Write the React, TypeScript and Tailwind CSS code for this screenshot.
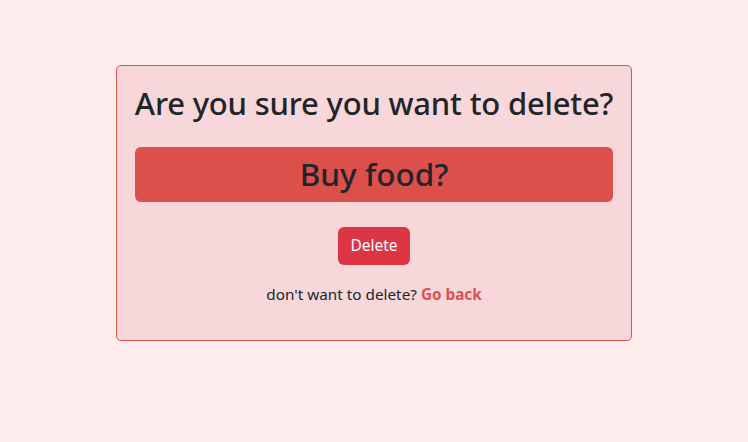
export default function App() {
  return (
    <div
      className="min-h-[442px] w-full bg-[#fdeded] pt-[65px] text-[#212529]"
      style={{ fontFamily: '"Noto Sans", "Open Sans", sans-serif' }}
    >
      <div className="mx-auto flex h-[276px] w-[516px] flex-col items-center rounded-[5px] border border-[#e05252] bg-[#f8d7da] px-[18px] pt-[18px]">
        <h1 className="whitespace-nowrap text-[31px] font-medium leading-[38px] tracking-[-0.2px]">
          Are you sure you want to delete?
        </h1>
        <div className="mt-[25px] flex h-[55px] w-full items-center justify-center rounded-[6px] bg-[#db504b] pb-[2px] text-[31.5px] font-medium">
          Buy food?
        </div>
        <button className="mt-[25px] h-[38px] rounded-[6px] bg-[#dc3545] px-[12px] text-[15.5px] text-white">
          Delete
        </button>
        <p className="mt-[17px] text-[15.3px] leading-[24px]">
          don't want to delete?{" "}
          <a href="#" className="font-bold text-[#d9534f]">
            Go back
          </a>
        </p>
      </div>
    </div>
  );
}
